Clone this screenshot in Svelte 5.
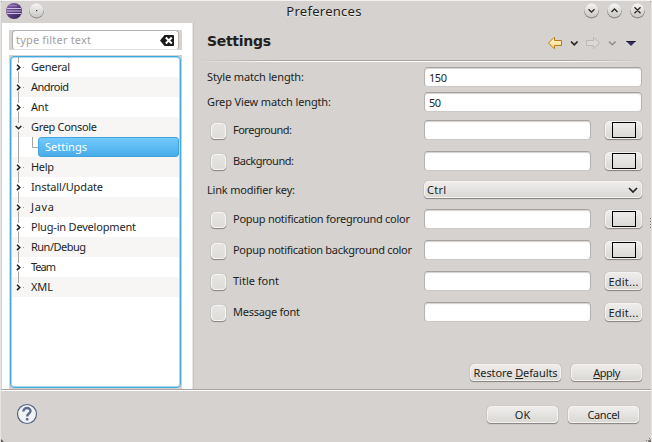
<script>
  const tree = [
    ['General', 39], ['Android', 38], ['Ant', 17.5], ['Grep Console', 66], ['Settings', 42],
    ['Help', 23], ['Install/Update', 72], ['Java', 23], ['Plug-in Development', 105],
    ['Run/Debug', 55], ['Team', 25], ['XML', 22]
  ];
  const rows = [
    { label: 'Style match length:', w: 97, value: '150', vw: 18, gap: 0 },
    { label: 'Grep View match length:', w: 124, value: '50', vw: 12, gap: 5 },
    { label: 'Foreground:', w: 59, check: true, end: 'color', gap: 8 },
    { label: 'Background:', w: 61, check: true, end: 'color', gap: 11 },
    { label: 'Link modifier key:', w: 88, combo: 'Ctrl', vw: 19, gap: 10 },
    { label: 'Popup notification foreground color', w: 177, check: true, end: 'color', gap: 10 },
    { label: 'Popup notification background color', w: 179, check: true, end: 'color', gap: 11 },
    { label: 'Title font', w: 46, check: true, end: 'edit', gap: 11 },
    { label: 'Message font', w: 67, check: true, end: 'edit', gap: 11 }
  ];

  // Spreads the letters so that a label takes up the given width.
  function fit(node, width) {
    const natural = node.getBoundingClientRect().width;
    node.style.letterSpacing = (width - natural) / (node.textContent.length - 1) + 'px';
  }
</script>

<div class="window">
  <header class="titlebar">
    <svg class="left" width="50" height="23" viewBox="0 0 50 23">
      <defs>
        <linearGradient id="orb" x1="0" y1="0" x2="1" y2="1">
          <stop offset="0" stop-color="#8b68ad" /><stop offset="1" stop-color="#2b1a55" />
        </linearGradient>
        <linearGradient id="knob" x1="0" y1="0" x2="0" y2="1">
          <stop offset="0" stop-color="#f7f6f6" /><stop offset="1" stop-color="#c9c6c3" />
        </linearGradient>
      </defs>
      <circle cx="14" cy="11" r="8" fill="url(#orb)" />
      <path d="M7 8.5h14M6.5 11h15M7 13.5h14" stroke="#cfc0e4" stroke-width="1.1" />
      <path d="M9 5.8h8" stroke="#a98bc8" />
      <circle cx="36.5" cy="11.2" r="7.2" fill="#85817e" />
      <circle cx="36.5" cy="10.5" r="7" fill="url(#knob)" />
      <rect x="36" y="10" width="1.2" height="1.2" fill="#333" />
    </svg>
    <span class="wtitle"><span use:fit={75}>Preferences</span></span>
    <svg class="right" width="72" height="23" viewBox="580 0 72 23">
      {#each [591.5, 614.5, 637.5] as x}
        <circle cx={x} cy="11.2" r="7.3" fill="#85817e" />
        <circle cx={x} cy="10.4" r="7" fill="url(#knob)" />
      {/each}
      <g fill="none" stroke="#292724" stroke-width="1.3">
        <path d="M588.5 9.2l3 3 3-3M611.5 12l3-3 3 3M634.5 7.3l6 6M640.5 7.3l-6 6" />
      </g>
    </svg>
  </header>

  <div class="main">
    <aside>
      <div class="filterwrap">
        <div class="filter">
          <span use:fit={75}>type filter text</span>
          <svg width="14" height="11" viewBox="0 0 14 11">
            <path d="M0 5.5L4.5 0H13a1 1 0 0 1 1 1v9a1 1 0 0 1-1 1H4.500z" fill="#191919" />
            <path d="M5.8 2.500l6 6M11.800 2.500l-6 6" stroke="#fff" stroke-width="2" />
          </svg>
        </div>
      </div>
      <div class="treewrap">
        <div class="tree">
          {#each tree as [name, width], i}
            <div class="node" class:alt={i % 2 === 1}>
              {#if i === 4}
                <svg width="26" height="20" viewBox="0 0 26 20">
                  <path d="M6.500 0v20M20.500 0v10.500h6" fill="none" stroke="#aaa5a1" />
                </svg>
                <span class="selected"><span use:fit={width}>{name}</span></span>
              {:else}
                <svg width="19" height="20" viewBox="0 0 19 20">
                  <path d={i === 11 ? 'M6.500 0v6' : 'M6.500 0v6M6.500 14.500v5.500'} stroke="#aaa5a1" />
                  <path d={i === 3 ? 'M3.700 9l2.800 2.800L9.300 9' : 'M5 7.700l2.800 2.700L5 13.100'}
                    fill="none" stroke="#22201e" stroke-width="1.500" />
                  <rect x="11" y="10" width="1" height="1" fill="#aaa5a1" />
                </svg>
                <span use:fit={width}>{name}</span>
              {/if}
            </div>
          {/each}
        </div>
      </div>
    </aside>

    <section>
      <div class="heading">
        <h1><span use:fit={64}>Settings</span></h1>
        <svg width="92" height="16" viewBox="546 35 92 16">
          <defs>
            <linearGradient id="gold" x1="0" y1="0" x2="0" y2="1">
              <stop offset="0" stop-color="#fffbe0" /><stop offset="1" stop-color="#f8d878" />
            </linearGradient>
          </defs>
          <path d="M548.500 43l5.500-5.500h.5v3h7v5h-7v3h-.5z" fill="url(#gold)" stroke="#b87a10" />
          <path d="M599.500 43l-5.500-5.500h-.5v3h-7v5h7v3h.5z" fill="#dbd8d5" stroke="#bbb7b3" />
          <path d="M571 41.500l3.300 3.300 3.300-3.300" fill="none" stroke="#25221f" stroke-width="1.700" />
          <path d="M609 41.500l3.300 3.300 3.300-3.300" fill="none" stroke="#918d8a" stroke-width="1.500" />
          <path d="M626 41h10l-5 5z" fill="#35305f" /><path d="M626 41h10l-1 1h-8z" fill="#17152a" />
        </svg>
      </div>
      <div class="rule dark"></div>
      <div class="rule light"></div>
      <div class="form">
        {#each rows as row}
          <div class="row" class:short={row.combo} style:margin-top="{row.gap}px">
            <div class="label">
              {#if row.check}<i class="check"></i>{/if}
              <span use:fit={row.w}>{row.label}</span>
            </div>
            {#if row.combo}
              <div class="btn combo">
                <span use:fit={row.vw}>{row.combo}</span>
                <svg width="10" height="8" viewBox="0 0 10 8">
                  <path d="M1 2l4 4 4-4" fill="none" stroke="#25221f" stroke-width="1.700" />
                </svg>
              </div>
            {:else}
              <div class="input">{#if row.value}<span use:fit={row.vw}>{row.value}</span>{/if}</div>
              {#if row.end}
                <div class="btn side">
                  {#if row.end === 'color'}<i class="swatch"></i>{:else}<span use:fit={30}>Edit...</span>{/if}
                </div>
              {/if}
            {/if}
          </div>
        {/each}
      </div>
      <div class="actions">
        <div class="btn restore"><span use:fit={84}>Restore <u>D</u>efaults</span></div>
        <div class="btn wide"><span use:fit={27}><u>A</u>pply</span></div>
      </div>
    </section>
  </div>

  <footer>
    <svg width="22" height="22" viewBox="0 0 22 22">
      <circle cx="11" cy="11" r="9.500" fill="#f3f2f3" stroke="#526484" stroke-width="1.200" />
      <path d="M7.500 8.600C7.300 3.900 14.800 4 14.500 8.200c-.2 2.300-3.300 2.400-3.300 5.200" fill="none" stroke="#586c94" stroke-width="2.400" />
      <rect x="9.800" y="15" width="2.700" height="2.500" rx=".8" fill="#586c94" />
    </svg>
    <div class="buttons">
      <div class="btn wide"><span use:fit={15.500}>OK</span></div>
      <div class="btn wide"><span use:fit={32.500}>Cancel</span></div>
    </div>
  </footer>
  <svg class="edge" width="652" height="442" viewBox="0 0 652 442">
    <path d="M0 0h3L0 3zM652 0h-3l3 3zM0 442v-4l4 4zM652 442v-4l-4 4z" fill="#55514e" />
    <path d="M650.500 218v12" stroke="#77736f" stroke-dasharray="1 2" />
    <path d="M646 440.500h5M649 438.500h2" stroke="#77736f" stroke-dasharray="1 1" />
  </svg>
</div>

<style>
  .window {
    position: relative;
    display: flex;
    flex-direction: column;
    box-sizing: border-box;
    width: 652px;
    height: 442px;
    overflow: hidden;
    background: #d6d2cf;
    border-top: 1px solid #f3f2f1;
    border-left: 1px solid #e6e3e1;
    border-right: 1px solid #e6e3e1;
    color: #221f1e;
    font: 11px/20px 'Noto Sans', sans-serif;
    white-space: nowrap;
  }
  span { display: inline-block; }
  svg { flex: none; display: block; }
  .titlebar { display: flex; height: 22px; justify-content: space-between; flex: none; }
  .left { margin: -1px 0 0 -1px; }
  .right { margin: -1px -1px 0 0; }
  .wtitle { font: 13px/23px 'Noto Sans', sans-serif; margin-left: 18px; margin-top: -1px; text-shadow: 0 1px #efedeb; }
  .main { display: flex; height: 366px; flex: none; }
  aside {
    box-sizing: border-box;
    width: 190px;
    margin-left: 1px;
    padding: 7px 10px 0 7px;
    background: #fff;
  }
  .filterwrap { height: 20px; padding: 0 3px; background: #d6d2cf; }
  .filter {
    box-sizing: border-box;
    display: flex;
    align-items: center;
    justify-content: space-between;
    height: 20px;
    padding: 0 4px 0 3px;
    border: 1px solid #b4b0ad;
    border-bottom-color: #e4e2e0;
    border-radius: 4px;
    background: #fff;
    color: #a3a09e;
  }
  .treewrap { margin-top: 5px; padding: 1px; height: 332px; background: #d6d2cf; }
  .tree {
    box-sizing: border-box;
    height: 332px;
    border: 1px solid #43a9df;
    border-radius: 4px;
    box-shadow: inset 0 0 0 1px #a8d9f3;
    background: #fff;
    padding: 0 1px;
  }
  .node { display: flex; height: 20px; }
  .node.alt { background: #f7f6f5; }
  .selected {
    flex: 1;
    height: 18px;
    padding-left: 6px;
    line-height: 18px;
    border: 1px solid #43a4dc;
    border-radius: 3px;
    background: linear-gradient(#73caff, #48ace8);
    color: #fff;
  }
  section {
    flex: 1;
    border-left: 1px solid #ebe9e8;
    box-shadow: inset 1px 0 #c6c2bf;
  }
  .heading { display: flex; justify-content: space-between; height: 37px; padding: 0 13px 0 14px; }
  .heading svg { margin-top: 12px; }
  h1 { margin: 6px 0 0; font: bold 14px/24px 'DejaVu Sans', sans-serif; }
  .rule { height: 1px; margin-left: 2px; }
  .dark { background: linear-gradient(90deg, #d6d2cf, #aaa6a3 18%, #aaa6a3 82%, #d6d2cf 98%); }
  .light { background: linear-gradient(90deg, #d6d2cf, #fff 18%, #fff 82%, #d6d2cf 98%); }
  .form { padding: 5px 9px 0 14px; }
  .row { display: flex; height: 20px; }
  .row.short { height: 18px; line-height: 18px; }
  .label { display: flex; width: 217px; flex: none; }
  .check {
    width: 13px;
    height: 14px;
    margin: 3px 7px 0 4px;
    border: 1px solid #f7f6f6;
    border-radius: 4px;
    background: linear-gradient(#e6e5e3, #dfddda);
    box-shadow: 0 1px 1px #85817e, 0 0 1px #a29e9b;
    flex: none;
  }
  .input {
    box-sizing: border-box;
    flex: 1;
    height: 20px;
    line-height: 19px;
    padding-left: 4px;
    border: 1px solid #b6b2af;
    border-top-color: #a5a19e;
    border-bottom-color: #cbc8c5;
    border-radius: 4px;
    background: #fff;
    box-shadow: inset 0 1px 1px #d5d2d0;
  }
  .btn {
    box-sizing: border-box;
    display: flex;
    justify-content: center;
    align-items: center;
    height: 17px;
    line-height: 17px;
    border: 1px solid #f4f3f2;
    border-radius: 4px;
    background: linear-gradient(#eeedec, #dbd9d5);
    box-shadow: 0 1px 1px #85817e, 0 0 1px #a29e9b;
  }
  .side { width: 37px; height: 18px; margin: 1px 0 0 14px; }
  .swatch { width: 22px; height: 14px; border: 1px solid #000; }
  .combo { flex: 1; justify-content: space-between; padding: 0 3px 0 2px; }
  .actions { display: flex; justify-content: flex-end; gap: 10px; padding: 42px 9px 0 0; }
  .restore { width: 91px; }
  .wide { width: 71px; }
  u { text-decoration-thickness: 1px; text-underline-offset: 1px; }
  footer {
    display: flex;
    justify-content: space-between;
    flex: 1;
    border-top: 1px solid #aaa6a3;
    box-shadow: inset 0 1px #fff;
    padding: 13px 12px 0 15px;
  }
  .buttons { display: flex; gap: 10px; padding-top: 3px; }
  .edge { position: absolute; top: -1px; left: -1px; pointer-events: none; }
</style>
